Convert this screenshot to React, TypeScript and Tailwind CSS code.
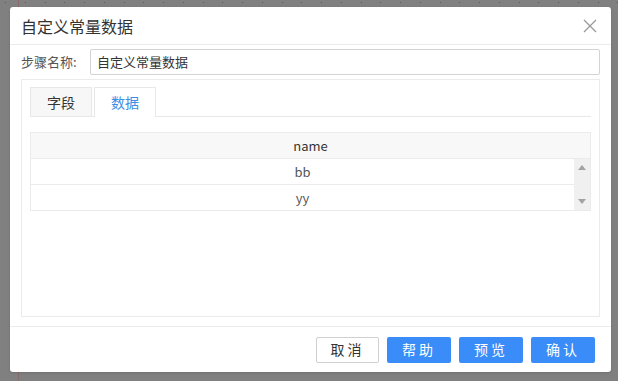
const font = { fontFamily: '"Noto Sans CJK SC", "Open Sans", sans-serif' };

export default function App() {
    return (
        <div
            className="relative h-[381px] w-[618px] overflow-hidden bg-[#808080] text-[13px] text-[#333]"
            style={font}
        >
            {/* canvas behind the overlay */}
            <div className="absolute left-[18px] top-0 h-full w-px bg-[#8a6a6a]" />
            <div className="absolute left-0 top-[2px] flex w-full gap-[19px] pl-[5px]">
                {Array.from({ length: 32 }).map((_, i) => (
                    <span key={i} className="h-px w-px bg-[#5a5a5a]" />
                ))}
            </div>

            <div className="absolute left-[10px] top-[7px] flex h-[365px] w-[601px] flex-col rounded-[3px] bg-white shadow">
                <div className="flex h-[38px] items-center justify-between border-b border-[#ebebeb] pl-[11px] pr-[14px]">
                    <span className="text-[16px] text-[#333]">自定义常量数据</span>
                    <svg width="14" height="14" viewBox="0 0 14 14" className="text-[#999]">
                        <path d="M1 1L13 13M13 1L1 13" stroke="currentColor" strokeWidth="1.3" />
                    </svg>
                </div>

                <div className="flex flex-1 flex-col px-[11px] pt-[4px]">
                    <div className="flex items-center">
                        <span className="w-[69px] text-[13px] text-[#555]">步骤名称:</span>
                        <div className="flex h-[26px] flex-1 items-center rounded-[2px] border border-[#d4d4d4] px-[6px] text-[13px]">
                            自定义常量数据
                        </div>
                    </div>

                    <div className="mt-[4px] flex h-[238px] flex-col border border-[#ebebeb] px-[8px] pt-[7px]">
                        <div className="flex items-end border-b border-[#e8e8e8]">
                            <div className="flex h-[29px] w-[62px] items-center justify-center border border-b-0 border-[#e8e8e8] bg-[#f7f7f7] text-[14px] text-[#333]">
                                字段
                            </div>
                            <div className="-mb-px ml-[2px] flex h-[30px] w-[62px] items-center justify-center border border-b-0 border-[#e8e8e8] bg-white text-[14px] text-[#3a8ee6]">
                                数据
                            </div>
                        </div>

                        <div className="mt-[15px] border border-[#ebebeb]">
                            <div className="flex h-[26px] items-center justify-center border-b border-[#ebebeb] bg-[#f8f8f8] text-[13px] text-[#333]">
                                name
                            </div>
                            <div className="flex">
                                <div className="flex-1">
                                    <div className="flex h-[26px] items-center justify-center border-b border-[#ebebeb] text-[13px] text-[#555]">
                                        bb
                                    </div>
                                    <div className="flex h-[25px] items-center justify-center text-[13px] text-[#555]">
                                        yy
                                    </div>
                                </div>
                                <div className="flex w-[16px] flex-col items-center justify-between bg-[#f0f0f0] py-[6px]">
                                    <svg width="8" height="5" viewBox="0 0 8 5">
                                        <path d="M0 5L4 0L8 5Z" fill="#a3a3a3" />
                                    </svg>
                                    <svg width="8" height="5" viewBox="0 0 8 5">
                                        <path d="M0 0L8 0L4 5Z" fill="#a3a3a3" />
                                    </svg>
                                </div>
                            </div>
                        </div>
                    </div>
                </div>

                <div className="flex h-[46px] items-center justify-end gap-[8px] border-t border-[#ebebeb] pr-[16px]">
                    <button className="h-[26px] w-[63px] rounded-[2px] border border-[#d0d0d0] bg-white text-[14px] tracking-[3px] text-[#333]">
                        取消
                    </button>
                    <button className="h-[26px] w-[64px] rounded-[2px] bg-[#3a8cf8] text-[14px] tracking-[3px] text-white">
                        帮助
                    </button>
                    <button className="h-[26px] w-[64px] rounded-[2px] bg-[#3a8cf8] text-[14px] tracking-[3px] text-white">
                        预览
                    </button>
                    <button className="h-[26px] w-[64px] rounded-[2px] bg-[#3a8cf8] text-[14px] tracking-[3px] text-white">
                        确认
                    </button>
                </div>
            </div>
        </div>
    );
}
